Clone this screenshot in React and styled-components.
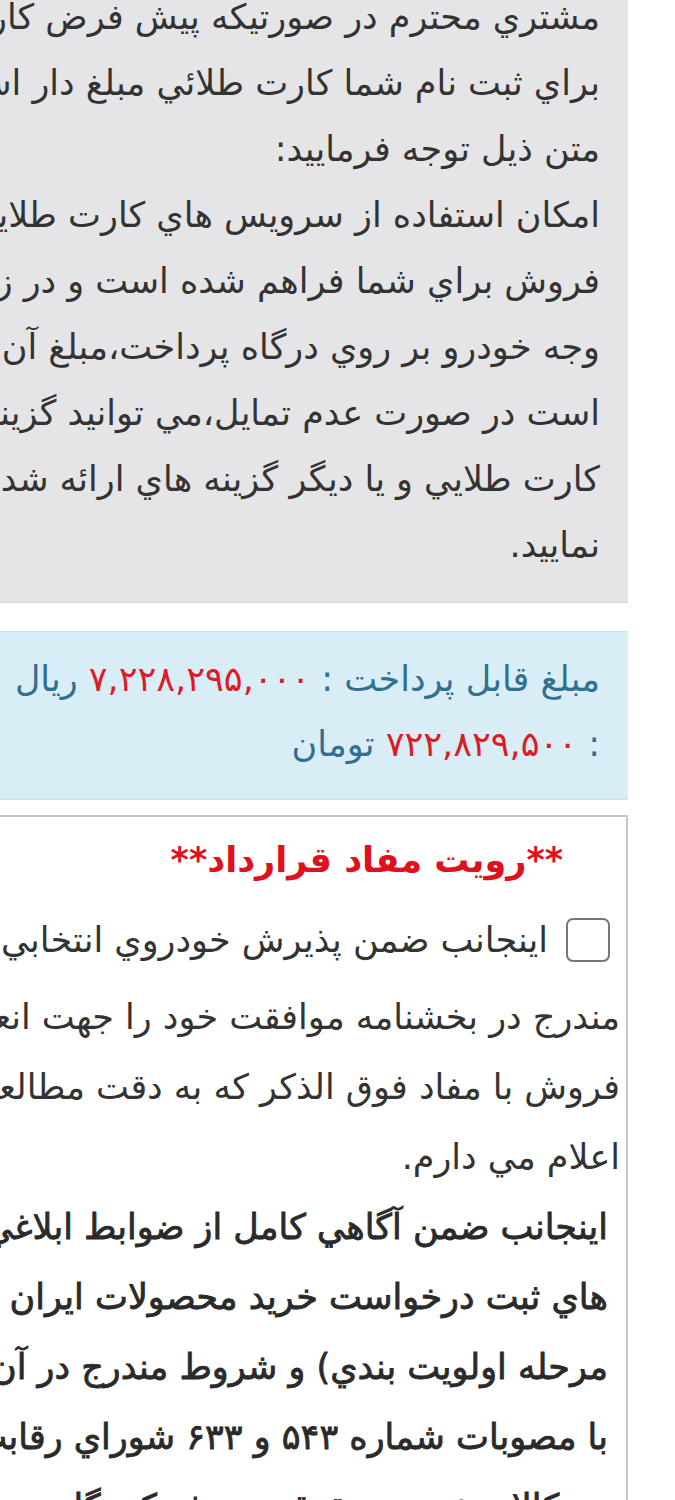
import React from "react";
import styled, { createGlobalStyle } from "styled-components";

const Global = createGlobalStyle`
  html, body { margin: 0; padding: 0; background: #ffffff; }
  body { font-family: "DejaVu Sans", "Noto Sans", sans-serif; color: #333333; }
`;

const Page = styled.div`
  width: 675px;
  overflow: hidden;
  direction: rtl;
  padding-right: 47px;
  box-sizing: border-box;
`;

const Stack = styled.div`
  margin-top: -16px;
  display: flex;
  flex-direction: column;
  align-items: flex-start;
`;

const Panel = styled.section`
  width: 1400px;
  flex-shrink: 0;
  box-sizing: border-box;
  direction: rtl;
  text-align: right;
  font-size: 35px;
`;

const GreyPanel = styled(Panel)`
  background: #e5e5e7;
  border-bottom: 1px solid #d4d4d6;
  padding: 0 28px 24px 0;
  line-height: 66px;
  color: #333333;
`;

const InfoPanel = styled(Panel)`
  margin-top: 28px;
  background: #d9edf7;
  border-top: 1px solid #c4e3f0;
  border-bottom: 1px solid #c4e3f0;
  padding: 15px 28px 22px 0;
  line-height: 65px;
  color: #31708f;
`;

const ContractPanel = styled(Panel)`
  margin-top: 15px;
  background: #ffffff;
  border: 2px solid #c6c6c6;
  padding: 17px 6px 0 0;
  line-height: 70px;
  color: #333333;
`;

const Line = styled.div`
  white-space: nowrap;
  padding-right: ${(p) => p.$indent || 0}px;
  ${(p) =>
    p.$bold &&
    `
    color: #2a2a2a;
    -webkit-text-stroke: 0.8px #2a2a2a;
  `}
`;

const Red = styled.span`
  color: #de1a24;
`;

const Heading = styled.div`
  color: #e0101c;
  font-weight: 700;
  line-height: 52px;
  padding-right: 57px;
  white-space: nowrap;
`;

const CheckRow = styled.div`
  display: flex;
  align-items: center;
  gap: 18px;
  margin-top: 21px;
  margin-bottom: 9px;
  padding-right: 10px;
  white-space: nowrap;
  line-height: 66px;
`;

const Box = styled.span`
  width: 44px;
  height: 44px;
  flex-shrink: 0;
  box-sizing: border-box;
  border: 2.5px solid #777777;
  border-radius: 7px;
  background: #ffffff;
`;

export default function App() {
  return (
    <>
      <Global />
      <Page>
        <Stack>
          <GreyPanel>
            <Line>مشتري محترم در صورتيكه پيش فرض كارت بانكي</Line>
            <Line>براي ثبت نام شما كارت طلائي مبلغ دار است، به</Line>
            <Line>متن ذيل توجه فرماييد:</Line>
            <Line>امكان استفاده از سرويس هاي كارت طلايي در</Line>
            <Line>فروش براي شما فراهم شده است و در زمان پرداخت</Line>
            <Line>وجه خودرو بر روي درگاه پرداخت،مبلغ آن لحاظ</Line>
            <Line>است در صورت عدم تمايل،مي توانيد گزينه عدم</Line>
            <Line>كارت طلايي و يا ديگر گزينه هاي ارائه شده را</Line>
            <Line>نماييد.</Line>
          </GreyPanel>
          <InfoPanel>
            <Line>
              مبلغ قابل پرداخت : <Red>۷,۲۲۸,۲۹۵,۰۰۰</Red> ريال
            </Line>
            <Line>
              : <Red>۷۲۲,۸۲۹,۵۰۰</Red> تومان
            </Line>
          </InfoPanel>
          <ContractPanel>
            <Heading>**رويت مفاد قرارداد**</Heading>
            <CheckRow>
              <Box role="checkbox" aria-checked="false" />
              <span>اينجانب ضمن پذيرش خودروي انتخابي و شرايط</span>
            </CheckRow>
            <Line>مندرج در بخشنامه موافقت خود را جهت انعقاد</Line>
            <Line>فروش با مفاد فوق الذكر كه به دقت مطالعه نموده</Line>
            <Line>اعلام مي دارم.</Line>
            <Line $bold $indent={12}>اينجانب ضمن آگاهي كامل از ضوابط ابلاغي در</Line>
            <Line $bold $indent={12}>هاي ثبت درخواست خريد محصولات ايران خودرو</Line>
            <Line $bold $indent={12}>مرحله اولويت بندي) و شروط مندرج در آن و</Line>
            <Line $bold $indent={12}>با مصوبات شماره ۵۴۳ و ۶۳۳ شوراي رقابت</Line>
            <Line $bold $indent={12}>هر كالا و خدمت حقوق مصرف كنندگان</Line>
          </ContractPanel>
        </Stack>
      </Page>
    </>
  );
}
